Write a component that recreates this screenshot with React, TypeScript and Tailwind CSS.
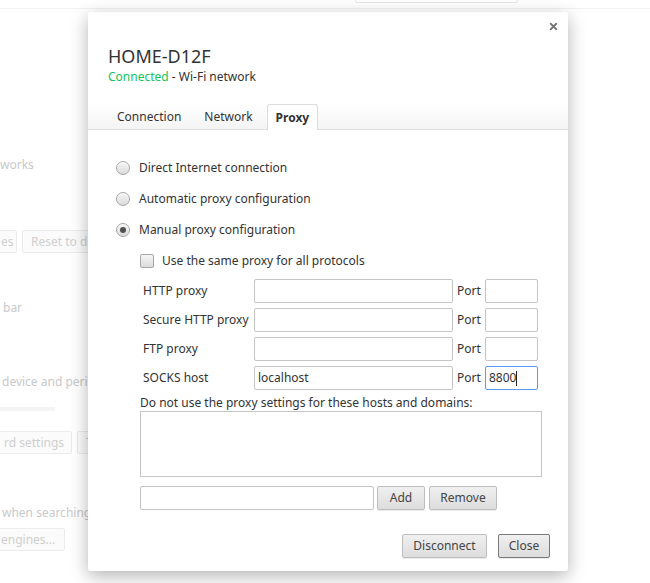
import { X } from 'lucide-react';

const font = { fontFamily: '"Noto Sans", "Open Sans", sans-serif' };

function Radio({ checked }: { checked?: boolean }) {
  return (
    <span className="w-[14px] h-[14px] rounded-full border border-[#a6a6a6] bg-gradient-to-b from-[#f5f5f5] to-[#dcdcdc] shadow-[inset_0_1px_1px_rgba(255,255,255,0.8)] flex items-center justify-center shrink-0">
      {checked && <span className="w-[6px] h-[6px] rounded-full bg-[#505050]" />}
    </span>
  );
}

function Field({ className = '', value = '', focused = false }: { className?: string; value?: string; focused?: boolean }) {
  return (
    <div
      className={`h-[24px] rounded-[2px] border bg-white flex items-center px-[3px] text-[12px] text-[#333] ${
        focused ? 'border-[#5b9af2]' : 'border-[#c4c4c4]'
      } ${className}`}
    >
      {value}
      {focused && <span className="w-px h-[15px] bg-[#222]" />}
    </div>
  );
}

function Btn({ label, className = '', dark = false }: { label: string; className?: string; dark?: boolean }) {
  return (
    <button
      className={`h-[24px] rounded-[2px] border bg-gradient-to-b from-[#f0f0f0] to-[#dddddd] text-[12px] text-[#444] shadow-[0_1px_0_rgba(0,0,0,0.08)] flex items-center justify-center ${
        dark ? 'border-[#7a7a7a]' : 'border-[#bdbdbd]'
      } ${className}`}
    >
      {label}
    </button>
  );
}

const rows = [
  { label: 'HTTP proxy', value: '', port: '' },
  { label: 'Secure HTTP proxy', value: '', port: '' },
  { label: 'FTP proxy', value: '', port: '' },
  { label: 'SOCKS host', value: 'localhost', port: '8800' },
];

function BackgroundPage() {
  const ghostBtn = 'h-[23px] border border-[#ececec] rounded-[2px] bg-[#fbfbfb] text-[12px] text-[#cfcfcf] flex items-center px-[8px] whitespace-nowrap';
  return (
    <div className="w-full h-[583px] bg-white overflow-hidden text-[12px] text-[#c9c9c9]">
      <div className="h-[9px] border-b border-[#f2f2f2] relative">
        <div className="absolute left-[355px] -top-[10px] w-[163px] h-[13px] border border-[#e6e6e6] rounded-[2px]" />
      </div>
      <div className="leading-[18px] mt-[147px]">works</div>
      <div className="flex gap-[5px] mt-[56px]">
        <div className={`${ghostBtn} -ml-[4px] pl-[4px] pr-[5px] w-[21px]`}>es</div>
        <div className={ghostBtn}>Reset to defaults</div>
      </div>
      <div className="leading-[18px] mt-[46px] pl-[3px]">bar</div>
      <div className="leading-[18px] mt-[56px] pl-[2px] whitespace-nowrap">device and peripherals</div>
      <div className="h-[4px] w-[55px] bg-[#f4f4f4] mt-[16px]" />
      <div className="flex gap-[5px] mt-[20px]">
        <div className={`${ghostBtn} -ml-[4px] pl-[7px] w-[76px]`}>rd settings</div>
        <div className={ghostBtn}>Touchpad settings</div>
      </div>
      <div className="leading-[18px] mt-[50px] pl-[2px] whitespace-nowrap">when searching from the omnibox</div>
      <div className="flex mt-[6px]">
        <div className={`${ghostBtn} -ml-[4px] pl-[4px] w-[69px]`}>engines...</div>
      </div>
    </div>
  );
}

export default function App() {
  return (
    <div className="relative w-[650px] h-[583px] overflow-hidden" style={font}>
      <BackgroundPage />
      <div className="absolute left-[88px] top-[12px] w-[480px] h-[559px] bg-white rounded-[3px] shadow-[0_5px_18px_rgba(0,0,0,0.3)] flex flex-col text-[#333]">
        <button className="absolute right-[9px] top-[9px] text-[#777]">
          <X className="w-[11px] h-[11px]" strokeWidth={4} />
        </button>
        <div className="px-[20px] pt-[32px]">
          <h1 className="text-[18px] leading-[24px]">HOME-D12F</h1>
          <p className="text-[12px] leading-[18px]">
            <span className="text-[#16c25c]">Connected</span> - Wi-Fi network
          </p>
        </div>
        <div className="mt-[18px] h-[26px] flex items-end gap-[5px] pl-[20px] border-b border-[#dcdcdc] bg-gradient-to-b from-white to-[#f4f4f4]">
          <div className="px-[9px] h-[25px] text-[12px] leading-[18px] pt-[4px]">Connection</div>
          <div className="px-[9px] h-[25px] text-[12px] leading-[18px] pt-[4px]">Network</div>
          <div className="px-[8px] h-[26px] -mb-px text-[12px] leading-[18px] pt-[4px] font-bold bg-white border border-b-0 border-[#dcdcdc] rounded-t-[3px]">
            Proxy
          </div>
        </div>
        <div className="pl-[28px] pt-[29px] text-[12px] leading-[18px]">
          <div className="flex flex-col gap-[13px]">
            <label className="flex items-center gap-[9px]">
              <Radio />
              Direct Internet connection
            </label>
            <label className="flex items-center gap-[9px]">
              <Radio />
              Automatic proxy configuration
            </label>
            <label className="flex items-center gap-[9px]">
              <Radio checked />
              Manual proxy configuration
            </label>
          </div>
          <div className="pl-[24px] mt-[13px]">
            <label className="flex items-center gap-[8px]">
              <span className="w-[14px] h-[14px] rounded-[2px] border border-[#a6a6a6] bg-gradient-to-b from-[#f5f5f5] to-[#dcdcdc] shrink-0" />
              Use the same proxy for all protocols
            </label>
            <div className="mt-[9px] flex flex-col gap-[5px]">
              {rows.map((r) => (
                <div key={r.label} className="flex items-center">
                  <span className="w-[114px] pl-[3px] whitespace-nowrap">{r.label}</span>
                  <Field className="w-[199px]" value={r.value} />
                  <span className="ml-[4px] w-[28px]">Port</span>
                  <Field className="w-[53px]" value={r.port} focused={r.port !== ''} />
                </div>
              ))}
            </div>
            <p className="mt-[4px] leading-[17px]">Do not use the proxy settings for these hosts and domains:</p>
            <div className="w-[402px] h-[66px] border border-[#c4c4c4] bg-white" />
            <div className="mt-[9px] flex items-center">
              <Field className="w-[234px]" />
              <Btn label="Add" className="ml-[3px] w-[48px]" />
              <Btn label="Remove" className="ml-[4px] w-[68px]" />
            </div>
          </div>
        </div>
        <div className="mt-auto pb-[13px] pr-[18px] flex justify-end gap-[11px]">
          <Btn label="Disconnect" className="w-[85px]" />
          <Btn label="Close" className="w-[52px]" dark />
        </div>
      </div>
    </div>
  );
}
